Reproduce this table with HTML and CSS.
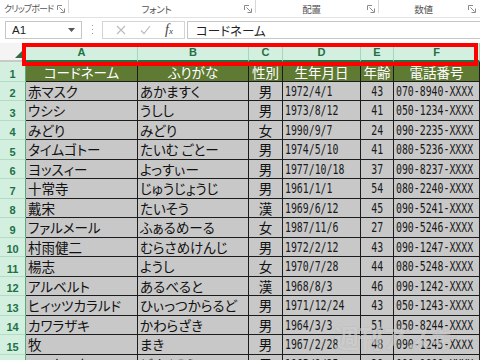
FILE: index.html
```html
<!DOCTYPE html>
<html lang="ja">
<head>
<meta charset="utf-8">
<link rel="stylesheet" href="styles.css">
</head>
<body>
<div class="app">
  <div class="ribbon">
    <div class="grp g1"><span class="lbl">クリップボード</span><svg class="launch" width="8" height="8" viewBox="0 0 8 8"><path d="M.5 5V.5H5" stroke="#8a8a8a" fill="none"/><path d="M2.5 2.5l4 4M3.5 7.5h4v-4" stroke="#8a8a8a" fill="none"/></svg></div>
    <div class="grp g2"><span class="lbl">フォント</span><svg class="launch" width="8" height="8" viewBox="0 0 8 8"><path d="M.5 5V.5H5" stroke="#8a8a8a" fill="none"/><path d="M2.5 2.5l4 4M3.5 7.5h4v-4" stroke="#8a8a8a" fill="none"/></svg></div>
    <div class="grp g3"><span class="lbl">配置</span><svg class="launch" width="8" height="8" viewBox="0 0 8 8"><path d="M.5 5V.5H5" stroke="#8a8a8a" fill="none"/><path d="M2.5 2.5l4 4M3.5 7.5h4v-4" stroke="#8a8a8a" fill="none"/></svg></div>
    <div class="grp g4"><span class="lbl">数値</span><svg class="launch" width="8" height="8" viewBox="0 0 8 8"><path d="M.5 5V.5H5" stroke="#8a8a8a" fill="none"/><path d="M2.5 2.5l4 4M3.5 7.5h4v-4" stroke="#8a8a8a" fill="none"/></svg></div>
  </div>
  <div class="fbar">
    <div class="namebox"><span>A1</span><svg width="7" height="4" viewBox="0 0 7 4"><path d="M0 0h7L3.5 4z" fill="#555"/></svg></div>
    <svg class="dots" width="3" height="12" viewBox="0 0 3 12"><rect x="1" y="1" width="1" height="1" fill="#999"/><rect x="1" y="5" width="1" height="1" fill="#999"/><rect x="1" y="9" width="1" height="1" fill="#999"/></svg>
    <div class="fbtns">
      <svg width="10" height="10" viewBox="0 0 10 10"><path d="M1 1l8 8M9 1L1 9" stroke="#bdbdbd" stroke-width="1.2" fill="none"/></svg>
      <svg width="11" height="10" viewBox="0 0 11 10"><path d="M1 5.5l3 3L10 1" stroke="#bdbdbd" stroke-width="1.2" fill="none"/></svg>
      <span class="fx"><i>f</i><span>x</span></span>
    </div>
    <div class="finput">コードネーム</div>
  </div>
  <div class="sheet">
    <div class="corner"><span class="tri"></span></div>
    <div class="ch">A</div><div class="ch">B</div><div class="ch">C</div><div class="ch">D</div><div class="ch">E</div><div class="ch">F</div>

    <div class="rh">1</div><div class="c h">コードネーム</div><div class="c h">ふりがな</div><div class="c h">性別</div><div class="c h">生年月日</div><div class="c h">年齢</div><div class="c h">電話番号</div>
    <div class="rh">2</div><div class="c">赤マスク</div><div class="c">あかますく</div><div class="c m">男</div><div class="c"><span class="n">1972/4/1</span></div><div class="c m"><span class="n">43</span></div><div class="c"><span class="n">070-8940-XXXX</span></div>
    <div class="rh">3</div><div class="c">ウシシ</div><div class="c">うしし</div><div class="c m">男</div><div class="c"><span class="n">1973/8/12</span></div><div class="c m"><span class="n">41</span></div><div class="c"><span class="n">050-1234-XXXX</span></div>
    <div class="rh">4</div><div class="c">みどり</div><div class="c">みどり</div><div class="c m">女</div><div class="c"><span class="n">1990/9/7</span></div><div class="c m"><span class="n">24</span></div><div class="c"><span class="n">090-2235-XXXX</span></div>
    <div class="rh">5</div><div class="c">タイムゴトー</div><div class="c">たいむ ごとー</div><div class="c m">男</div><div class="c"><span class="n">1974/5/10</span></div><div class="c m"><span class="n">41</span></div><div class="c"><span class="n">080-5236-XXXX</span></div>
    <div class="rh">6</div><div class="c">ヨッスィー</div><div class="c">よっすぃー</div><div class="c m">男</div><div class="c"><span class="n">1977/10/18</span></div><div class="c m"><span class="n">37</span></div><div class="c"><span class="n">090-8237-XXXX</span></div>
    <div class="rh">7</div><div class="c">十常寺</div><div class="c">じゅうじょうじ</div><div class="c m">男</div><div class="c"><span class="n">1961/1/1</span></div><div class="c m"><span class="n">54</span></div><div class="c"><span class="n">080-2240-XXXX</span></div>
    <div class="rh">8</div><div class="c">戴宋</div><div class="c">たいそう</div><div class="c m">漢</div><div class="c"><span class="n">1969/6/12</span></div><div class="c m"><span class="n">45</span></div><div class="c"><span class="n">090-5241-XXXX</span></div>
    <div class="rh">9</div><div class="c">ファルメール</div><div class="c">ふぁるめーる</div><div class="c m">女</div><div class="c"><span class="n">1987/11/6</span></div><div class="c m"><span class="n">27</span></div><div class="c"><span class="n">090-5246-XXXX</span></div>
    <div class="rh">10</div><div class="c">村雨健二</div><div class="c">むらさめけんじ</div><div class="c m">男</div><div class="c"><span class="n">1972/2/12</span></div><div class="c m"><span class="n">43</span></div><div class="c"><span class="n">090-1247-XXXX</span></div>
    <div class="rh">11</div><div class="c">楊志</div><div class="c">ようし</div><div class="c m">女</div><div class="c"><span class="n">1970/7/28</span></div><div class="c m"><span class="n">44</span></div><div class="c"><span class="n">080-5248-XXXX</span></div>
    <div class="rh">12</div><div class="c">アルベルト</div><div class="c">あるべると</div><div class="c m">漢</div><div class="c"><span class="n">1968/8/3</span></div><div class="c m"><span class="n">46</span></div><div class="c"><span class="n">090-1242-XXXX</span></div>
    <div class="rh">13</div><div class="c">ヒィッツカラルド</div><div class="c">ひぃっつからるど</div><div class="c m">男</div><div class="c"><span class="n">1971/12/24</span></div><div class="c m"><span class="n">43</span></div><div class="c"><span class="n">050-1243-XXXX</span></div>
    <div class="rh">14</div><div class="c">カワラザキ</div><div class="c">かわらざき</div><div class="c m">男</div><div class="c"><span class="n">1964/3/3</span></div><div class="c m"><span class="n">51</span></div><div class="c"><span class="n">050-8244-XXXX</span></div>
    <div class="rh">15</div><div class="c">牧</div><div class="c">まき</div><div class="c m">男</div><div class="c"><span class="n">1967/2/28</span></div><div class="c m"><span class="n">48</span></div><div class="c"><span class="n">090-1245-XXXX</span></div>
    <div class="rh">16</div><div class="c">ドスクロウ</div><div class="c">どすくろう</div><div class="c m">男</div><div class="c"><span class="n">1965/9/25</span></div><div class="c m"><span class="n">39</span></div><div class="c"><span class="n">090-1888-XXXX</span></div>

    <div class="selframe"></div>
    <div class="wm">週刊アスキー</div>
  </div>
</div>
</body>
</html>
```

FILE: styles.css
```css
html, body {
  margin: 0;
  padding: 0;
  width: 480px;
  height: 360px;
  overflow: hidden;
  background: #ffffff;
}

.app {
  width: 480px;
  height: 360px;
  overflow: hidden;
  display: flex;
  flex-direction: column;
  font-family: "Noto Sans CJK JP", sans-serif;
}

/* ribbon group labels */
.ribbon {
  height: 18px;
  flex: none;
  display: flex;
  background: #ffffff;
  box-sizing: border-box;
  border-bottom: 1px solid #e2e2e2;
}
.grp {
  position: relative;
  display: flex;
  align-items: center;
  justify-content: center;
  padding-right: 12px;
  box-sizing: border-box;
}
.grp::after {
  content: "";
  position: absolute;
  right: 0;
  top: 0;
  height: 13px;
  border-right: 1px solid #d8d8d8;
}
.g1 { width: 69px; justify-content: flex-start; padding-left: 4px; padding-right: 0; }
.g2 { width: 187px; }
.g3 { width: 123px; }
.g4 { width: 101px; }
.g4::after { display: none; }
.lbl {
  font-size: 9.5px;
  line-height: 12px;
  white-space: nowrap;
  color: #555555;
  font-feature-settings: "palt";
  letter-spacing: -0.2px;
}
.g1 .lbl {
  font-size: 9px;
  letter-spacing: -0.9px;
}
.launch {
  position: absolute;
  right: 4px;
  top: 5px;
}

/* formula bar */
.fbar {
  height: 24px;
  flex: none;
  display: flex;
  align-items: center;
  padding-left: 5px;
  box-sizing: border-box;
  background: #ffffff;
}
.namebox {
  width: 77px;
  height: 18px;
  box-sizing: border-box;
  border: 1px solid #c6c6c6;
  display: flex;
  align-items: center;
  justify-content: space-between;
  padding: 0 6px 0 6px;
  font-family: "Liberation Sans", sans-serif;
  font-size: 11.5px;
  color: #222222;
}
.dots {
  margin-left: 9px;
}
.fbtns {
  margin-left: 8px;
  width: 83px;
  height: 18px;
  box-sizing: border-box;
  border: 1px solid #d4d4d4;
  display: flex;
  align-items: center;
  justify-content: space-around;
  padding: 0 4px 0 6px;
}
.fx {
  font-family: "Liberation Serif", serif;
  color: #444444;
  font-size: 14px;
  line-height: 1;
}
.fx span { font-size: 9px; font-style: italic; }
.finput {
  margin-left: 2px;
  flex: 1;
  height: 18px;
  box-sizing: border-box;
  border: 1px solid #c6c6c6;
  border-right: none;
  padding-left: 8px;
  display: flex;
  align-items: center;
  font-size: 12.5px;
  color: #222222;
  font-feature-settings: "palt";
}

/* sheet */
.sheet {
  position: relative;
  flex: none;
  margin-top: 1px;
  display: grid;
  grid-template-columns: 26px 112px 111px 34px 78px 33px 1fr;
  grid-template-rows: 19px repeat(16, 19.5px);
}
.corner {
  position: relative;
  background: #f4f4f4;
  border-right: 1px solid #c9c9c9;
  border-bottom: 2px solid #c9c9c9;
}
.tri {
  position: absolute;
  right: 3px;
  bottom: 2px;
  width: 0;
  height: 0;
  border-left: 7px solid transparent;
  border-bottom: 7px solid #2f6b45;
}
.ch {
  background: #d3efdf;
  color: #1e7145;
  border-right: 1px solid #a9d5b9;
  border-bottom: 2px solid #217346;
  display: flex;
  align-items: center;
  justify-content: center;
  font-family: "Liberation Sans", sans-serif;
  font-weight: bold;
  font-size: 11px;
}
.rh {
  background: #d3efdf;
  color: #1e7145;
  border-right: 1px solid #5fa77b;
  border-bottom: 1px solid #b3dcc2;
  display: flex;
  align-items: flex-end;
  justify-content: center;
  padding-bottom: 1px;
  box-sizing: border-box;
  font-family: "Liberation Sans", sans-serif;
  font-weight: bold;
  font-size: 11px;
}
.c {
  background: #c8c8c8;
  border-right: 1px solid #1c1c1c;
  border-bottom: 1px solid #1c1c1c;
  box-sizing: border-box;
  display: flex;
  align-items: center;
  padding-left: 2px;
  white-space: nowrap;
  overflow: hidden;
  font-size: 13.5px;
  color: #111111;
  font-feature-settings: "palt";
}
.c.h {
  background: #5f7a32;
  color: #ffffff;
  justify-content: center;
  padding-left: 0;
  padding-top: 2px;
}
.c.m {
  justify-content: center;
  padding-left: 0;
}
.n {
  display: inline-block;
  font-family: "DejaVu Sans Mono", monospace;
  font-size: 13.5px;
  color: #1a1a1a;
  transform: scaleX(0.73);
  transform-origin: 0 50%;
}
.c.m .n { transform-origin: 50% 50%; }

.selframe {
  position: absolute;
  left: 22px;
  top: 0;
  width: 456px;
  height: 23px;
  box-sizing: border-box;
  border: 4px solid #ff0000;
  pointer-events: none;
}
.wm {
  position: absolute;
  left: 334px;
  top: 276px;
  font-size: 25px;
  font-weight: bold;
  letter-spacing: -1px;
  color: rgba(255, 255, 255, 0.45);
  text-shadow: 0 0 1px rgba(90, 90, 90, 0.35);
  pointer-events: none;
}
```
